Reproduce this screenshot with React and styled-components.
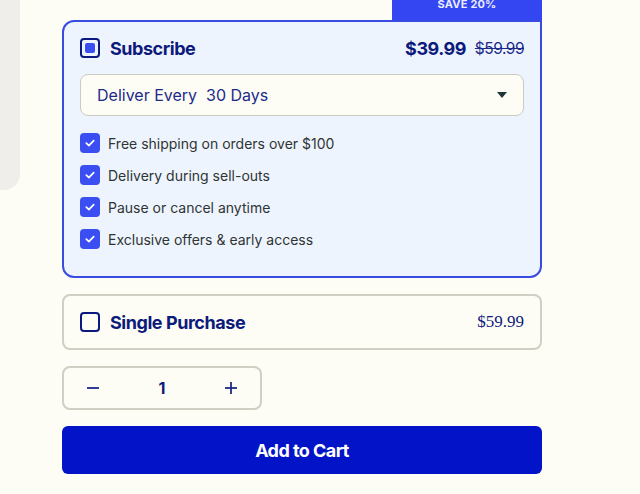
import React from "react";
import styled, { createGlobalStyle } from "styled-components";

const Global = createGlobalStyle`
  html, body { margin: 0; padding: 0; background: #fdfdf5; }
  body { font-family: Inter, "Noto Sans", Arial, sans-serif; overflow: hidden; }
  * { box-sizing: border-box; }
`;

const Page = styled.div`
  display: flex;
  align-items: flex-start;
  width: 640px;
  height: 494px;
  overflow: hidden;
`;

const SidePanel = styled.div`
  width: 20px;
  height: 190px;
  flex: none;
  background: #efeeea;
  border-bottom-right-radius: 16px;
  margin-right: 42px;
`;

const Column = styled.div`
  width: 480px;
  display: flex;
  flex-direction: column;
  margin-top: -8px;
`;

const Badge = styled.div`
  align-self: flex-end;
  width: 150px;
  padding: 4px 0 8px;
  line-height: 16px;
  background: #3346f2;
  color: #e8ecff;
  font-size: 11px;
  font-weight: 700;
  text-align: center;
  letter-spacing: 0.2px;
`;

const OptionCard = styled.div`
  border: 2px solid ${(p) => (p.$active ? "#3a4be2" : "#d0cfc3")};
  background: ${(p) => (p.$active ? "#eef4fe" : "#fdfdf5")};
  border-radius: ${(p) => (p.$active ? "12px 0 12px 12px" : "8px")};
  padding: ${(p) => (p.$active ? "16px 16px 27px" : "16px")};
  margin-bottom: 16px;
`;

const HeaderRow = styled.div`
  display: flex;
  align-items: center;
  height: 20px;
`;

const RadioBox = styled.div`
  width: 20px;
  height: 20px;
  border: 2px solid #0b1880;
  border-radius: 4px;
  display: flex;
  align-items: center;
  justify-content: center;
  margin-right: 10px;
  flex: none;
  &::after {
    content: "";
    display: ${(p) => (p.$checked ? "block" : "none")};
    width: 10px;
    height: 10px;
    border-radius: 2px;
    background: #3a4ef2;
  }
`;

const Title = styled.div`
  font-size: 18px;
  font-weight: 700;
  color: #0c1a7c;
  flex: 1;
  letter-spacing: -0.45px;
`;

const Price = styled.span`
  font-size: 18px;
  font-weight: 700;
  color: #0c1a7c;
  letter-spacing: -0.5px;
`;

const OldPrice = styled.span`
  font-size: 15.5px;
  color: #1c2a8a;
  text-decoration: line-through;
  margin-left: 9px;
  letter-spacing: -0.5px;
`;

const SerifPrice = styled.span`
  font-family: "Liberation Serif", "Times New Roman", serif;
  font-size: 17px;
  color: #0c1a7c;
`;

const Select = styled.div`
  margin-top: 16px;
  height: 42px;
  border: 1px solid #cbcbc1;
  border-radius: 8px;
  background: #fdfdf5;
  display: flex;
  align-items: center;
  padding: 0 16px;
  font-size: 16px;
  color: #1c2a8a;
  white-space: pre;
`;

const SelectText = styled.span`
  flex: 1;
`;

const List = styled.ul`
  list-style: none;
  margin: 17px 0 0;
  padding: 0;
  display: flex;
  flex-direction: column;
  gap: 12px;
`;

const Item = styled.li`
  display: flex;
  align-items: center;
  height: 20px;
  font-size: 14px;
  color: #2f3434;
`;

const CheckBox = styled.span`
  width: 20px;
  height: 20px;
  border-radius: 4px;
  background: #3a4ef2;
  display: inline-flex;
  align-items: center;
  justify-content: center;
  margin-right: 8px;
  flex: none;
`;

const Stepper = styled.div`
  width: 200px;
  height: 44px;
  border: 2px solid #d0cfc3;
  border-radius: 8px;
  display: grid;
  grid-template-columns: 58px 80px 58px;
  align-items: center;
  justify-items: center;
  color: #0c1a7c;
  margin-bottom: 16px;
`;

const StepBtn = styled.span`
  display: flex;
  align-items: center;
  justify-content: center;
`;

const Qty = styled.span`
  font-size: 16px;
  font-weight: 700;
  color: #0c1a7c;
`;

const CartButton = styled.button`
  height: 48px;
  border: none;
  border-radius: 6px;
  background: #0313c8;
  color: #fff;
  font-family: inherit;
  font-size: 18px;
  font-weight: 700;
  letter-spacing: -0.55px;
`;

const Check = () => (
  <svg width="12" height="12" viewBox="0 0 12 12" fill="none">
    <polyline points="2.3,6.2 4.9,8.6 9.7,3.7" stroke="#fff" strokeWidth="1.7" strokeLinecap="round" strokeLinejoin="round" />
  </svg>
);

const features = [
  "Free shipping on orders over $100",
  "Delivery during sell-outs",
  "Pause or cancel anytime",
  "Exclusive offers & early access",
];

export default function App() {
  return (
    <>
      <Global />
      <Page>
        <SidePanel />
        <Column>
          <Badge>SAVE 20%</Badge>
          <OptionCard $active>
            <HeaderRow>
              <RadioBox $checked />
              <Title>Subscribe</Title>
              <Price>$39.99</Price>
              <OldPrice>$59.99</OldPrice>
            </HeaderRow>
            <Select>
              <SelectText>Deliver Every  30 Days</SelectText>
              <svg width="10" height="6" viewBox="0 0 10 6">
                <polygon points="0,0 10,0 5,6" fill="#1d3535" />
              </svg>
            </Select>
            <List>
              {features.map((f) => (
                <Item key={f}>
                  <CheckBox><Check /></CheckBox>
                  {f}
                </Item>
              ))}
            </List>
          </OptionCard>
          <OptionCard>
            <HeaderRow>
              <RadioBox />
              <Title>Single Purchase</Title>
              <SerifPrice>$59.99</SerifPrice>
            </HeaderRow>
          </OptionCard>
          <Stepper>
            <StepBtn>
              <svg width="14" height="14" viewBox="0 0 14 14">
                <line x1="1" y1="7" x2="13" y2="7" stroke="#1c2a8a" strokeWidth="1.8" />
              </svg>
            </StepBtn>
            <Qty>1</Qty>
            <StepBtn>
              <svg width="14" height="14" viewBox="0 0 14 14">
                <line x1="1" y1="7" x2="13" y2="7" stroke="#1c2a8a" strokeWidth="1.8" />
                <line x1="7" y1="1" x2="7" y2="13" stroke="#1c2a8a" strokeWidth="1.8" />
              </svg>
            </StepBtn>
          </Stepper>
          <CartButton>Add to Cart</CartButton>
        </Column>
      </Page>
    </>
  );
}
